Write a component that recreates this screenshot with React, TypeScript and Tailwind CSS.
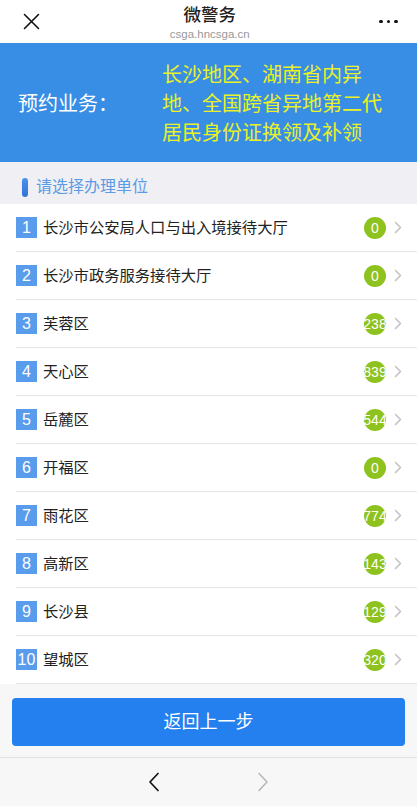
import React from "react";

const rows: [string, string][] = [
  ["长沙市公安局人口与出入境接待大厅", "0"],
  ["长沙市政务服务接待大厅", "0"],
  ["芙蓉区", "238"],
  ["天心区", "839"],
  ["岳麓区", "544"],
  ["开福区", "0"],
  ["雨花区", "774"],
  ["高新区", "143"],
  ["长沙县", "129"],
  ["望城区", "320"],
];

const font = { fontFamily: '"Liberation Sans", "Noto Sans CJK SC", sans-serif' };

export default function App() {
  return (
    <div className="w-[417px] h-[806px] flex flex-col bg-[#f7f7f7] overflow-hidden" style={font}>
      {/* top nav */}
      <div className="h-[43px] bg-white flex items-center justify-between px-[22px] shrink-0">
        <svg width="17" height="17" viewBox="0 0 17 17" className="ml-[1px]">
          <path d="M1.5 1.5 L15.5 15.5 M15.5 1.5 L1.5 15.5" stroke="#111" strokeWidth="1.6" strokeLinecap="round" />
        </svg>
        <div className="flex flex-col items-center">
          <div className="text-[17.5px] leading-[20px] font-medium text-[#222] mt-[2px]">微警务</div>
          <div className="text-[11.5px] leading-[14px] text-[#999] mt-[2px]">csga.hncsga.cn</div>
        </div>
        <div className="flex gap-[4px] items-center mr-[-3px]">
          <span className="w-[3.5px] h-[3.5px] rounded-full bg-[#111]" />
          <span className="w-[3.5px] h-[3.5px] rounded-full bg-[#111]" />
          <span className="w-[3.5px] h-[3.5px] rounded-full bg-[#111]" />
        </div>
      </div>

      {/* banner */}
      <div className="h-[119px] bg-[#388de5] flex items-center pl-[18px] pt-[3px] shrink-0">
        <div className="w-[144px] text-[20px] text-white leading-[29px]">预约业务：</div>
        <div className="text-[20px] leading-[29px] text-[#eaf226]">
          <div>长沙地区、湖南省内异</div>
          <div>地、全国跨省异地第二代</div>
          <div>居民身份证换领及补领</div>
        </div>
      </div>

      {/* section header */}
      <div className="h-[42px] bg-[#efeff4] flex items-center pl-[22px] pt-[8px] shrink-0">
        <span className="w-[6px] h-[19px] rounded-[3px] bg-gradient-to-b from-[#4a92ec] to-[#2f74d8]" />
        <span className="ml-[8px] text-[16px] leading-[20px] text-[#5b9be6]">请选择办理单位</span>
      </div>

      {/* list */}
      <div className="bg-white shrink-0">
        {rows.map(([name, count], i) => (
          <div key={i} className="ml-[16px] h-[48px] border-b border-[#e6e6e6] flex items-center">
            <span className="w-[21px] h-[21px] bg-[#5a9cec] text-white text-[16px] leading-[21px] flex items-center justify-center">
              {i + 1}
            </span>
            <span className="ml-[6px] text-[15.3px] text-[#222] leading-[20px]">{name}</span>
            <div className="ml-auto flex items-center mr-[15px]">
              <span className="w-[22px] h-[22px] rounded-full bg-[#8dc21f] text-white text-[14px] leading-[22px] flex items-center justify-center whitespace-nowrap">
                {count}
              </span>
              <svg width="8" height="13" viewBox="0 0 8 13" className="ml-[8px]">
                <path d="M1.5 1.5 L6.5 6.5 L1.5 11.5" stroke="#c4c4c8" strokeWidth="1.6" fill="none" strokeLinecap="round" strokeLinejoin="round" />
              </svg>
            </div>
          </div>
        ))}
      </div>

      {/* button */}
      <div className="px-[12px] pt-[14px] pb-[11px] shrink-0">
        <div className="h-[48px] rounded-[4px] bg-[#2380ee] flex items-center justify-center text-white text-[18px]">
          返回上一步
        </div>
      </div>

      {/* bottom bar */}
      <div className="flex-1 border-t border-[#e2e2e2] bg-[#f7f7f7] flex items-center justify-center gap-[97px]">
        <svg width="12" height="20" viewBox="0 0 12 20">
          <path d="M10 1.5 L2 10 L10 18.5" stroke="#111" strokeWidth="1.7" fill="none" strokeLinecap="round" strokeLinejoin="round" />
        </svg>
        <svg width="12" height="20" viewBox="0 0 12 20">
          <path d="M2 1.5 L10 10 L2 18.5" stroke="#b5b5b5" strokeWidth="1.5" fill="none" strokeLinecap="round" strokeLinejoin="round" />
        </svg>
      </div>
    </div>
  );
}
